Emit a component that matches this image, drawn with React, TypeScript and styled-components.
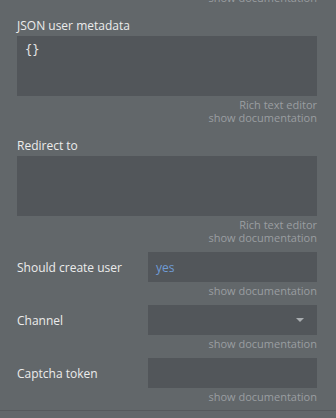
import styled, { createGlobalStyle } from "styled-components";

const GlobalStyle = createGlobalStyle`
  html, body {
    margin: 0;
    padding: 0;
    background: #62676a;
  }
  body {
    font-family: "Open Sans", "Noto Sans", sans-serif;
    overflow: hidden;
  }
`;

const Panel = styled.div`
  display: flex;
  flex-direction: column;
  padding: 0 19px 7px 17px;
  margin-top: -11px;
  background: #62676a;
  border-bottom: 1px solid #565a5d;
`;

const Hints = styled.div`
  display: flex;
  flex-direction: column;
  align-items: flex-end;
  margin-top: 2px;
`;

const Hint = styled.span<{ $link?: boolean }>`
  font-size: 11px;
  line-height: 13px;
  color: #9a9ea1;
  cursor: ${(p) => (p.$link ? "pointer" : "default")};
`;

const Block = styled.div<{ $gap?: number }>`
  display: flex;
  flex-direction: column;
  margin-top: ${(p) => p.$gap ?? 0}px;
`;

const Label = styled.label`
  font-size: 12px;
  line-height: 16px;
  color: #ececec;
  margin-bottom: 2px;
`;

const TextArea = styled.div`
  height: 60px;
  background: #52565a;
  padding: 7px 8px;
  box-sizing: border-box;
  font-family: "DejaVu Sans Mono", "Liberation Mono", monospace;
  font-size: 12px;
  color: #e6e6e6;
`;

const Row = styled.div`
  display: flex;
  align-items: center;
`;

const RowLabel = styled.span`
  width: 131px;
  font-size: 12px;
  color: #ececec;
`;

const Field = styled.div`
  flex: 1;
  height: 30px;
  background: #52565a;
  display: flex;
  align-items: center;
  justify-content: space-between;
  padding: 0 8px;
  box-sizing: border-box;
`;

const Value = styled.span`
  font-size: 12px;
  color: #6f9bd6;
`;

const Caret = styled.span`
  width: 0;
  height: 0;
  border-left: 4px solid transparent;
  border-right: 4px solid transparent;
  border-top: 4px solid #a9adb0;
  margin-right: 5px;
`;

const DocHints = () => (
  <Hints>
    <Hint $link>show documentation</Hint>
  </Hints>
);

const RichHints = () => (
  <Hints>
    <Hint>Rich text editor</Hint>
    <Hint $link>show documentation</Hint>
  </Hints>
);

export default function App() {
  return (
    <>
      <GlobalStyle />
      <Panel>
        <Hints>
          <Hint $link>show documentation</Hint>
        </Hints>

        <Block $gap={14}>
          <Label>JSON user metadata</Label>
          <TextArea>{"{}"}</TextArea>
          <RichHints />
        </Block>

        <Block $gap={14}>
          <Label>Redirect to</Label>
          <TextArea />
          <RichHints />
        </Block>

        <Block $gap={8}>
          <Row>
            <RowLabel>Should create user</RowLabel>
            <Field>
              <Value>yes</Value>
            </Field>
          </Row>
          <DocHints />
        </Block>

        <Block $gap={8}>
          <Row>
            <RowLabel>Channel</RowLabel>
            <Field>
              <span />
              <Caret />
            </Field>
          </Row>
          <DocHints />
        </Block>

        <Block $gap={8}>
          <Row>
            <RowLabel>Captcha token</RowLabel>
            <Field />
          </Row>
          <DocHints />
        </Block>
      </Panel>
    </>
  );
}
